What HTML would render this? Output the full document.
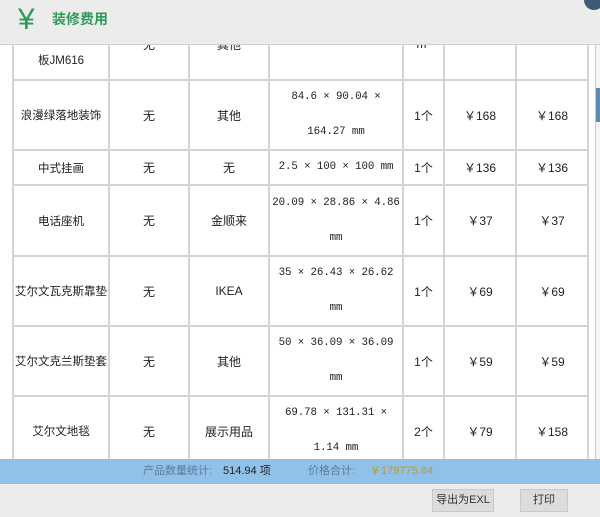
<!DOCTYPE html>
<html><head><meta charset="utf-8"><style>
*{margin:0;padding:0;box-sizing:border-box}
body{width:600px;height:517px;overflow:hidden;background:#fff;font-family:"Liberation Sans","Noto Sans CJK SC",sans-serif;font-size:12px;color:#222;position:relative}
.hdr{position:absolute;left:0;top:0;width:600px;height:45px;background:#ececec;border-bottom:1px solid #cfcfcf;z-index:3}
.yen{position:absolute;left:18px;top:2px;font-size:30px;color:#2e9a5a;line-height:36px}
.ttl{position:absolute;left:52px;top:9px;font-size:14px;color:#2e9a5a;font-weight:bold}
.close{position:absolute;left:584px;top:-10px;width:20px;height:20px;border-radius:50%;background:#3d5a78}
.v{position:absolute;top:0;width:2px;height:470px;background:#d4d4d4}
.h{position:absolute;left:12px;width:577px;height:2px;background:#d4d4d4}
.c{position:absolute;display:flex;align-items:center;justify-content:center;text-align:center;white-space:nowrap}
.m{font-family:"Liberation Mono","Noto Sans CJK SC",monospace;font-size:10.8px;line-height:35px;letter-spacing:-0.1px}
.c1{left:14px;width:94px;font-size:11.5px}.c2{left:110px;width:78px}.c3{left:190px;width:78px}.c4{left:270px;width:132px}.c5{left:404px;width:39px}.c6{left:445px;width:70px}.c7{left:517px;width:70px}
.r0{top:9px;height:70px}.r1{top:81px;height:68px}.r2{top:151px;height:33px}.r3{top:186px;height:69px}.r4{top:257px;height:68px}.r5{top:327px;height:68px}.r6{top:397px;height:68px}
.sb{position:absolute;left:595px;top:45px;width:5px;height:414px;border-left:1px solid #ccc;background:#f4f4f4;z-index:2}
.th{position:absolute;left:596px;top:88px;width:4px;height:34px;background:#5a8ab8;z-index:2}
.bar{position:absolute;left:0;top:459px;width:600px;height:25px;background:#8fc1e9;z-index:3;font-size:11px;line-height:25px}
.ft{position:absolute;left:0;top:484px;width:600px;height:33px;background:#ececec;z-index:3}
.btn{position:absolute;top:5px;height:23px;background:#dcdcdc;border:1px solid #c8c8c8;font-size:11px;line-height:21px;text-align:center;color:#333}
</style></head><body>
<div class="v" style="left:12px"></div><div class="v" style="left:108px"></div><div class="v" style="left:188px"></div><div class="v" style="left:268px"></div><div class="v" style="left:402px"></div><div class="v" style="left:443px"></div><div class="v" style="left:515px"></div><div class="v" style="left:587px"></div>
<div class="h" style="top:79px"></div><div class="h" style="top:149px"></div><div class="h" style="top:184px"></div><div class="h" style="top:255px"></div><div class="h" style="top:325px"></div><div class="h" style="top:395px"></div><div class="h" style="top:465px"></div>

<div class="c c1 r0" style="line-height:35px">实木地<br>板JM616</div><div class="c c2 r0">无</div><div class="c c3 r0">其他</div><div class="c c5 r0">m²</div>

<div class="c c1 r1">浪漫绿落地装饰</div><div class="c c2 r1">无</div><div class="c c3 r1">其他</div><div class="c c4 r1 m">84.6 × 90.04 ×<br>164.27 mm</div><div class="c c5 r1">1个</div><div class="c c6 r1">￥168</div><div class="c c7 r1">￥168</div>

<div class="c c1 r2">中式挂画</div><div class="c c2 r2">无</div><div class="c c3 r2">无</div><div class="c c4 r2 m">2.5 × 100 × 100 mm</div><div class="c c5 r2">1个</div><div class="c c6 r2">￥136</div><div class="c c7 r2">￥136</div>

<div class="c c1 r3">电话座机</div><div class="c c2 r3">无</div><div class="c c3 r3">金顺来</div><div class="c c4 r3 m">20.09 × 28.86 × 4.86<br>mm</div><div class="c c5 r3">1个</div><div class="c c6 r3">￥37</div><div class="c c7 r3">￥37</div>

<div class="c c1 r4">艾尔文瓦克斯靠垫</div><div class="c c2 r4">无</div><div class="c c3 r4">IKEA</div><div class="c c4 r4 m">35 × 26.43 × 26.62<br>mm</div><div class="c c5 r4">1个</div><div class="c c6 r4">￥69</div><div class="c c7 r4">￥69</div>

<div class="c c1 r5">艾尔文克兰斯垫套</div><div class="c c2 r5">无</div><div class="c c3 r5">其他</div><div class="c c4 r5 m">50 × 36.09 × 36.09<br>mm</div><div class="c c5 r5">1个</div><div class="c c6 r5">￥59</div><div class="c c7 r5">￥59</div>

<div class="c c1 r6">艾尔文地毯</div><div class="c c2 r6">无</div><div class="c c3 r6">展示用品</div><div class="c c4 r6 m">69.78 × 131.31 ×<br>1.14 mm</div><div class="c c5 r6">2个</div><div class="c c6 r6">￥79</div><div class="c c7 r6">￥158</div>

<div class="hdr"><div class="yen">¥</div><div class="ttl">装修费用</div><div class="close"></div></div>
<div class="sb"></div><div class="th"></div>
<div class="bar"><span style="position:absolute;left:143px;color:#5a7d99">产品数量统计:</span><span style="position:absolute;left:223px;color:#222">514.94 项</span><span style="position:absolute;left:308px;color:#5a7d99">价格合计:</span><span style="position:absolute;left:370px;color:#b99a2a">￥179775.84</span></div>
<div class="ft"><div class="btn" style="left:432px;width:62px">导出为EXL</div><div class="btn" style="left:520px;width:48px">打印</div></div>
</body></html>
